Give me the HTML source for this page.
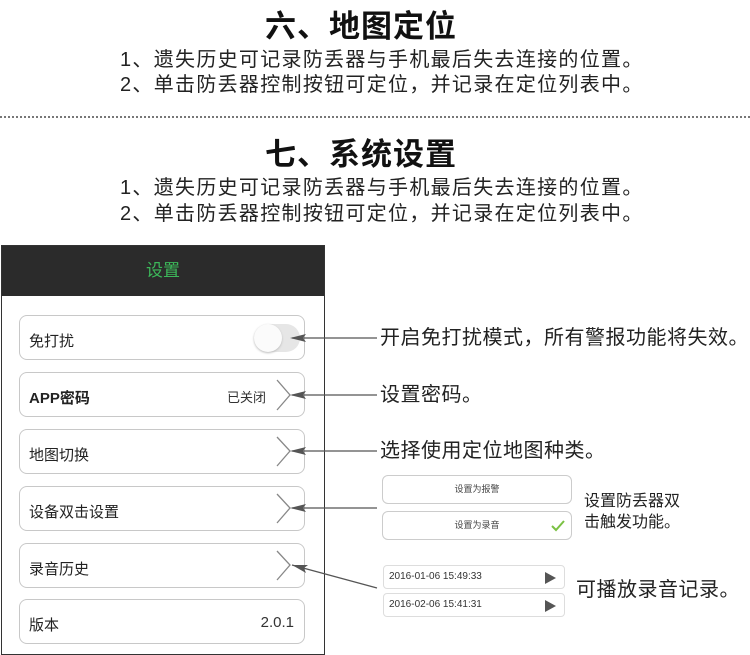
<!DOCTYPE html>
<html><head><meta charset="utf-8"><style>
*{margin:0;padding:0;box-sizing:border-box}
body{width:750px;height:645px;background:#fff;position:relative;overflow:hidden;font-family:"Liberation Sans","Noto Sans CJK SC",sans-serif;color:#222}
.a{position:absolute;white-space:nowrap;line-height:1}
.t{font-size:31px;font-weight:bold;left:265px;letter-spacing:1px;color:#111}
.l{font-size:20px;left:120px;color:#222;letter-spacing:1.3px}
.panel{position:absolute;left:1px;top:245px;width:324px;height:410px;border:1.5px solid #333;background:#fff}
.hd{position:absolute;left:0;top:0;width:100%;height:50px;background:#2b2b2b;color:#3cb85a;font-size:17px;text-align:center;line-height:50px}
.row{position:absolute;left:19px;width:286px;height:45px;border:1.5px solid #c8c8c8;border-radius:8px;background:#fff}
.row span{position:absolute;left:9px;top:14px;font-size:15px;color:#222}
.row b{position:absolute;right:10px;top:14px;font-size:15px;font-weight:normal;color:#333}
.btn{position:absolute;left:382px;width:190px;height:29px;border:1.5px solid #ccc;border-radius:6px;font-size:9px;text-align:center;line-height:27px;color:#444}
.rec{position:absolute;left:383px;width:182px;height:24px;border:1px solid #ddd;border-radius:4px;font-size:10px;color:#333;line-height:22px;padding-left:5px}
.rec i{position:absolute;right:8px;top:6px;width:0;height:0;border-left:11px solid #555;border-top:6px solid transparent;border-bottom:6px solid transparent}
.n{font-size:20px;color:#222;letter-spacing:0.5px}
</style></head><body>
<div class="a t" style="top:11px">六、地图定位</div>
<div class="a l" style="top:50px">1、遗失历史可记录防丢器与手机最后失去连接的位置。</div>
<div class="a l" style="top:75px">2、单击防丢器控制按钮可定位，并记录在定位列表中。</div>
<div style="position:absolute;left:0;top:116px;width:750px;border-top:2px dotted #777"></div>
<div class="a t" style="top:139px">七、系统设置</div>
<div class="a l" style="top:178px">1、遗失历史可记录防丢器与手机最后失去连接的位置。</div>
<div class="a l" style="top:204px">2、单击防丢器控制按钮可定位，并记录在定位列表中。</div>

<div class="panel"><div class="hd">设置</div></div>
<div class="row" style="top:315px"><span>免打扰</span>
<div style="position:absolute;right:4px;top:8px;width:46px;height:28px;border-radius:14px;background:#e6e6e6"><div style="width:28px;height:28px;border-radius:14px;background:#fbfbfb;box-shadow:0 1px 2px #bbb"></div></div></div>
<div class="row" style="top:372px"><span style="font-weight:bold">APP密码</span><b style="right:38px;font-size:13px">已关闭</b></div>
<div class="row" style="top:429px"><span>地图切换</span></div>
<div class="row" style="top:486px"><span>设备双击设置</span></div>
<div class="row" style="top:543px"><span>录音历史</span></div>
<div class="row" style="top:599px"><span>版本</span><b>2.0.1</b></div>

<svg style="position:absolute;left:0;top:0" width="750" height="645">
<g stroke="#888" stroke-width="1.3" fill="none">
<path d="M277 380 L290 395 L277 410"/>
<path d="M277 437 L290 451 L277 466"/>
<path d="M277 494 L290 508 L277 523"/>
<path d="M277 551 L290 565 L277 580"/>
</g>
<g stroke="#555" stroke-width="1.3">
<line x1="292" y1="338" x2="377" y2="338"/>
<line x1="292" y1="395" x2="377" y2="395"/>
<line x1="292" y1="451" x2="377" y2="451"/>
<line x1="292" y1="508" x2="377" y2="508"/>
<line x1="292" y1="565" x2="377" y2="588"/>
</g>
<g fill="#555">
<path d="M290 338 L306 334 L303 338 L306 342Z"/>
<path d="M290 395 L306 391 L303 395 L306 399Z"/>
<path d="M290 451 L306 447 L303 451 L306 455Z"/>
<path d="M290 508 L306 504 L303 508 L306 512Z"/>
<path d="M292 565 L308 565 L304 568 L306 573Z"/>
</g>
</svg>

<div class="a n" style="left:380px;top:328px">开启免打扰模式，所有警报功能将失效。</div>
<div class="a n" style="left:380px;top:385px">设置密码。</div>
<div class="a n" style="left:380px;top:441px">选择使用定位地图种类。</div>
<div class="btn" style="top:475px">设置为报警</div>
<div class="btn" style="top:511px">设置为录音<svg style="position:absolute;right:6px;top:8px" width="14" height="12"><path d="M1 6 L5 10 L13 1" stroke="#7ac143" stroke-width="2" fill="none"/></svg></div>
<div class="a" style="left:584px;top:491px;font-size:16px;line-height:21px">设置防丢器双<br>击触发功能。</div>
<div class="rec" style="top:565px">2016-01-06 15:49:33<i></i></div>
<div class="rec" style="top:593px">2016-02-06 15:41:31<i></i></div>
<div class="a n" style="left:576px;top:580px">可播放录音记录。</div>
</body></html>
